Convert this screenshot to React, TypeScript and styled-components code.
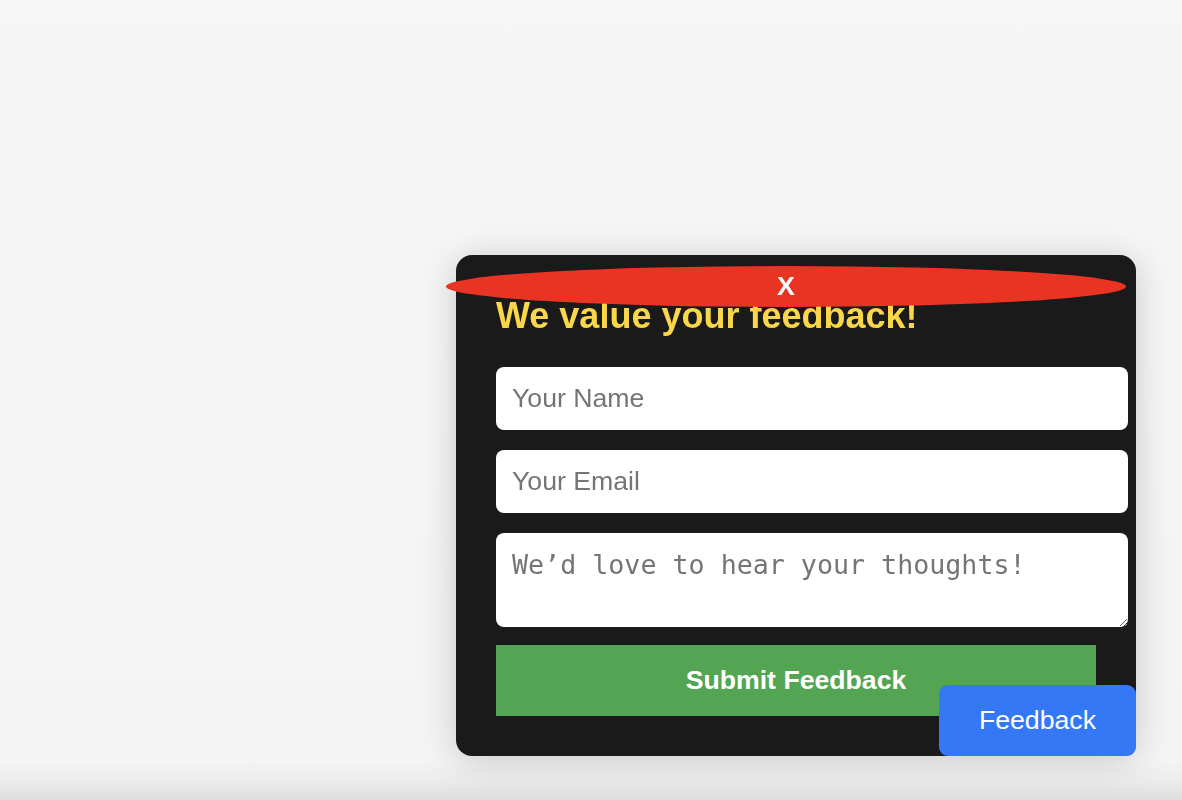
import React from "react";
import styled, { createGlobalStyle } from "styled-components";

const GlobalStyle = createGlobalStyle`
  html, body {
    margin: 0;
    padding: 0;
    height: 100%;
  }
  body {
    font-family: "Liberation Sans", Arial, sans-serif;
    background: linear-gradient(
      to bottom,
      #f6f6f6 0,
      #f4f4f4 760px,
      #ececec 780px,
      #dedede 800px
    );
    background-attachment: fixed;
  }
`;

const Panel = styled.div`
  position: fixed;
  right: 46px;
  bottom: 44px;
  width: 600px;
  padding: 40px;
  background: #1a1a1a;
  border-radius: 16px;
  box-shadow: 0 4px 36px rgba(0, 0, 0, 0.18);
  display: flex;
  flex-direction: column;
  align-items: flex-start;
`;

const CloseButton = styled.button`
  position: absolute;
  top: 11px;
  right: 10px;
  width: 100%;
  padding: 5px 10px;
  border: none;
  border-radius: 50%;
  background: #e93424;
  color: #ffffff;
  font-family: "Liberation Sans", Arial, sans-serif;
  font-size: 26.67px;
  font-weight: bold;
  line-height: normal;
  cursor: pointer;
`;

const Heading = styled.h2`
  margin: 0 0 30px;
  color: #f9d64a;
  font-family: "Liberation Sans", Arial, sans-serif;
  font-size: 36px;
  font-weight: bold;
  line-height: normal;
`;

const fieldBase = `
  display: block;
  box-sizing: content-box;
  width: 100%;
  padding: 16px;
  border: none;
  border-radius: 8px;
  background: #ffffff;
  color: #222;
  font-size: 26.67px;
  line-height: normal;
  outline: none;
  &::placeholder {
    color: #757575;
  }
`;

const TextField = styled.input<{ $gap: number }>`
  ${fieldBase}
  font-family: "Liberation Sans", Arial, sans-serif;
  margin: 0 0 ${(p) => p.$gap}px;
`;

const MessageField = styled.textarea<{ $gap: number }>`
  ${fieldBase}
  font-family: "DejaVu Sans Mono", monospace;
  margin: 0 0 ${(p) => p.$gap}px;
`;

const SubmitButton = styled.button`
  width: 100%;
  padding: 20px;
  border: none;
  border-radius: 0;
  background: #53a553;
  color: #ffffff;
  font-family: "Liberation Sans", Arial, sans-serif;
  font-size: 26.67px;
  font-weight: bold;
  line-height: normal;
  cursor: pointer;
`;

const ToggleButton = styled.button`
  position: fixed;
  right: 46px;
  bottom: 44px;
  padding: 20px 40px;
  border: none;
  border-radius: 9px;
  background: #3478f6;
  color: #ffffff;
  font-family: "Liberation Sans", Arial, sans-serif;
  font-size: 26.67px;
  font-weight: normal;
  line-height: normal;
  cursor: pointer;
`;

export default function App() {
  return (
    <>
      <GlobalStyle />
      <Panel>
        <CloseButton type="button">X</CloseButton>
        <Heading>We value your feedback!</Heading>
        <TextField $gap={20} type="text" placeholder="Your Name" />
        <TextField $gap={20} type="email" placeholder="Your Email" />
        <MessageField $gap={18} placeholder="We’d love to hear your thoughts!" />
        <SubmitButton type="button">Submit Feedback</SubmitButton>
      </Panel>
      <ToggleButton type="button">Feedback</ToggleButton>
    </>
  );
}
